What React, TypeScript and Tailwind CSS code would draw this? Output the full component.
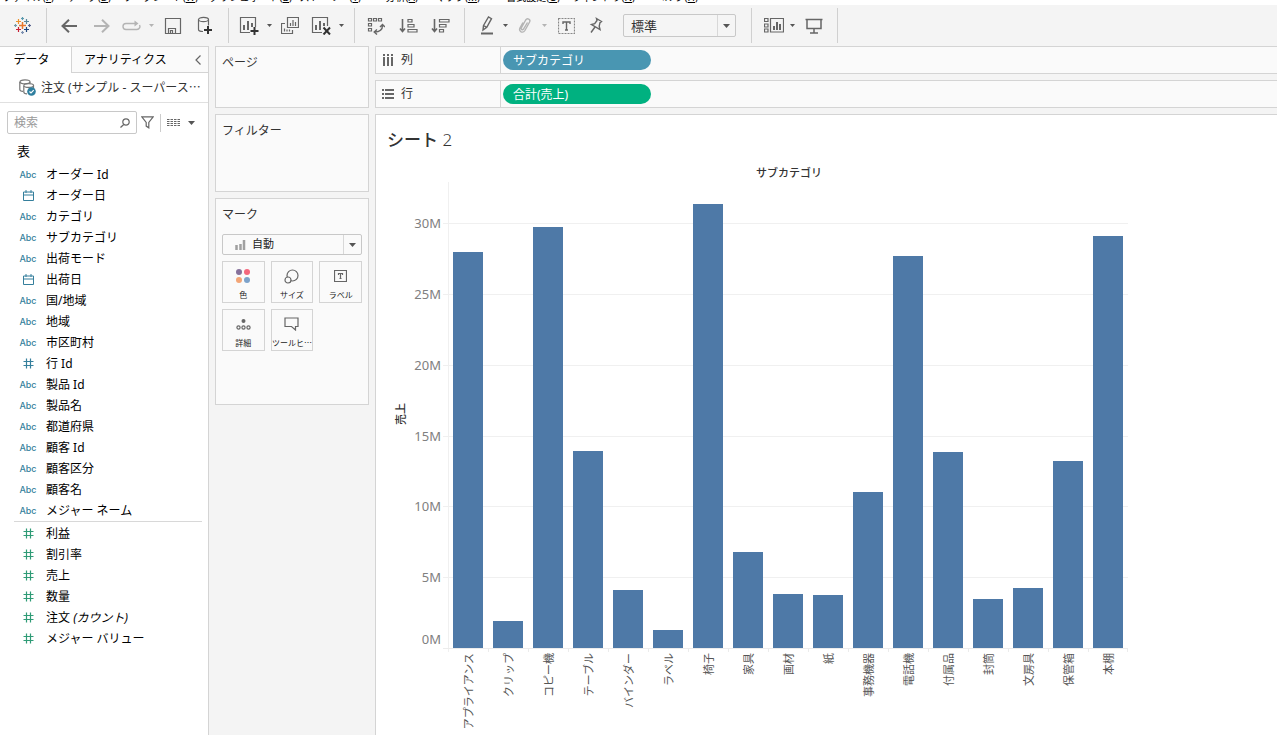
import React from "react";

const menus = [
  { label: "ファイル", key: "F", width: "w-[54px]" },
  { label: "データ", key: "D", width: "w-[57px]" },
  { label: "ワークシート", key: "W", width: "w-[87px]" },
  { label: "ダッシュボード", key: "B", width: "w-[94px]" },
  { label: "ストーリー", key: "T", width: "w-[69px]" },
  { label: "分析", key: "A", width: "w-[57px]" },
  { label: "マップ", key: "M", width: "w-[62px]" },
  { label: "書式設定", key: "O", width: "w-[80px]" },
  { label: "ウィンドウ", key: "N", width: "w-[75px]" },
  { label: "ヘルプ", key: "H", width: "w-[63px]" },
];

type FieldKind = "text" | "date" | "number";

const dimensions: { name: string; kind: FieldKind }[] = [
  { name: "オーダー Id", kind: "text" },
  { name: "オーダー日", kind: "date" },
  { name: "カテゴリ", kind: "text" },
  { name: "サブカテゴリ", kind: "text" },
  { name: "出荷モード", kind: "text" },
  { name: "出荷日", kind: "date" },
  { name: "国/地域", kind: "text" },
  { name: "地域", kind: "text" },
  { name: "市区町村", kind: "text" },
  { name: "行 Id", kind: "number" },
  { name: "製品 Id", kind: "text" },
  { name: "製品名", kind: "text" },
  { name: "都道府県", kind: "text" },
  { name: "顧客 Id", kind: "text" },
  { name: "顧客区分", kind: "text" },
  { name: "顧客名", kind: "text" },
  { name: "メジャー ネーム", kind: "text" },
];

const measures = [
  { name: "利益" },
  { name: "割引率" },
  { name: "売上" },
  { name: "数量" },
  { name: "注文", suffix: "(カウント)" },
  { name: "メジャー バリュー" },
];

/* Bar heights in chart units: 425 units stand for 30M. */
const bars = [
  { name: "アプライアンス", h: 396 },
  { name: "クリップ", h: 27 },
  { name: "コピー機", h: 421 },
  { name: "テーブル", h: 197 },
  { name: "バインダー", h: 58 },
  { name: "ラベル", h: 18 },
  { name: "椅子", h: 444 },
  { name: "家具", h: 96 },
  { name: "画材", h: 54 },
  { name: "紙", h: 53 },
  { name: "事務機器", h: 156 },
  { name: "電話機", h: 392 },
  { name: "付属品", h: 196 },
  { name: "封筒", h: 49 },
  { name: "文房具", h: 60 },
  { name: "保管箱", h: 187 },
  { name: "本棚", h: 412 },
];

const ticks = [
  { label: "30M", y: 58 },
  { label: "25M", y: 129 },
  { label: "20M", y: 200 },
  { label: "15M", y: 271 },
  { label: "10M", y: 341 },
  { label: "5M", y: 412 },
];

function Caret({ className = "fill-[#555]" }: { className?: string }) {
  return (
    <svg width="7" height="4" viewBox="0 0 7 4" className={className} aria-hidden="true">
      <path d="M0 0h7L3.5 4z" />
    </svg>
  );
}

function SmallCaret({ className = "fill-[#555]" }: { className?: string }) {
  return (
    <svg width="5" height="3" viewBox="0 0 5 3" className={className} aria-hidden="true">
      <path d="M0 0h5L2.5 3z" />
    </svg>
  );
}

function Tool({ label, width, children }: { label: string; width: string; children: React.ReactNode }) {
  return (
    <button type="button" aria-label={label} className={`flex h-8 shrink-0 items-center justify-center ${width}`}>
      {children}
    </button>
  );
}

function Separator({ className }: { className: string }) {
  return <div className={`h-[35px] w-px shrink-0 bg-[#d0d0d0] ${className}`} />;
}

function Icon({ w = 18, h = 18, className = "stroke-[#666]", children }: { w?: number; h?: number; className?: string; children: React.ReactNode }) {
  return (
    <svg width={w} height={h} viewBox={`0 0 ${w} ${h}`} fill="none" strokeWidth="1.2" className={`shrink-0 ${className}`} aria-hidden="true">
      {children}
    </svg>
  );
}

function Logo() {
  return (
    <Icon w={17} h={17} className="">
      <path d="M8.5 5v7M5 8.5h7" stroke="#e8762c" strokeWidth="1.5" />
      <path d="M4.5 2v5M2 4.5h5" stroke="#eb912c" />
      <path d="M12.5 2v5M10 4.5h5" stroke="#59879b" />
      <path d="M4.5 10v5M2 12.5h5" stroke="#c72035" />
      <path d="M12.5 10v5M10 12.5h5" stroke="#1f457e" />
      <path d="M8.5 0v3M7 1.5h3" stroke="#5b9aae" />
      <path d="M8.5 14v3M7 15.5h3" stroke="#7b8fb0" />
      <path d="M1.5 7v3M0 8.5h3" stroke="#7199a6" />
      <path d="M15.5 7v3M14 8.5h3" stroke="#5b6591" />
    </Icon>
  );
}

function Toolbar() {
  return (
    <div role="toolbar" aria-label="ツールバー" className="flex h-[41px] items-center bg-[#f4f4f4]">
      <Tool label="スタートページ" width="w-11"><Logo /></Tool>
      <Separator className="mr-1.5 ml-0.5" />
      <Tool label="元に戻す" width="w-8">
        <Icon w={17} h={14}><path d="M1.5 7H16M8 .8L1.5 7L8 13.2" strokeWidth="2" /></Icon>
      </Tool>
      <Tool label="やり直す" width="w-8">
        <Icon w={17} h={14} className="stroke-[#b4b4b4]"><path d="M1 7h14.5M9 .8L15.5 7L9 13.2" strokeWidth="2" /></Icon>
      </Tool>
      <Tool label="繰り返し" width="w-7">
        <Icon w={19} h={12} className="stroke-[#b4b4b4]">
          <path d="M13 3.500H4a3 3 0 0 0 0 6h11a3 3 0 0 0 2.500-4.500" strokeWidth="1.400" />
          <path d="M12.500 .5L16.500 3.500L12.500 6.500z" fill="#b4b4b4" stroke="none" />
        </Icon>
      </Tool>
      <Tool label="繰り返しメニュー" width="w-3"><SmallCaret className="fill-[#b4b4b4]" /></Tool>
      <Tool label="保存" width="w-8">
        <Icon><path d="M1.5 1.5h15v15h-15zM4.500 16.500v-5h7v5M6.500 16.500v-3h2v3" /></Icon>
      </Tool>
      <Tool label="新しいデータソース" width="w-8">
        <Icon w={16} h={19}>
          <path d="M1.500 3.500v10c0 1 2 2 4.500 2M11.500 3.500v6" />
          <ellipse cx="6.500" cy="3.500" rx="5" ry="2.200" />
          <path d="M11 10v8M7 14h8" stroke="#333" strokeWidth="2" />
        </Icon>
      </Tool>
      <Separator className="mr-1 ml-[7px]" />
      <Tool label="新しいワークシート" width="w-8">
        <Icon w={20} h={19}>
          <path d="M11 16.500H1.500v-15h15V11" />
          <path d="M5 14V9M9 14V5M13 11V7" strokeWidth="2" />
          <path d="M15.500 11v8M11.500 15h8" stroke="#333" strokeWidth="2" />
        </Icon>
      </Tool>
      <Tool label="新規メニュー" width="w-2"><SmallCaret /></Tool>
      <Tool label="複製" width="w-[34px]">
        <Icon>
          <path d="M6.500 .5h11v10h-11zM4 6.500H.5v10h11V13" />
          <path d="M9.500 9V6M12 9V3M14.500 9V5M3.500 14.500v-3M6 14.500v-2M8.500 14.500v-2" />
        </Icon>
      </Tool>
      <Tool label="クリア" width="w-7">
        <Icon w={20} h={19}>
          <path d="M11 16.500H1.500v-15h15V10" />
          <path d="M5 14V9M9 14V5M13 10V7" strokeWidth="2" />
          <path d="M12.500 11.500l6.500 7M19 11.500l-6.500 7" stroke="#333" strokeWidth="2" />
        </Icon>
      </Tool>
      <Tool label="クリアメニュー" width="w-3"><SmallCaret /></Tool>
      <Separator className="mr-[5px] ml-[7px]" />
      <Tool label="行と列の交換" width="w-8">
        <Icon>
          <path d="M1.500 1.500h3v2.500h-3zM6.500 1.500h3v2.500h-3zM11.500 1.500h3v2.500h-3zM1.500 6.500h3V9h-3zM1.500 11.500h3V14h-3z" />
          <path d="M15.500 8.500c0 4-2.500 6.500-8 6.500M13 10l2.500-2.500L18 10M10 12.500L7.200 15l2.800 2.500" strokeWidth="1.400" />
        </Icon>
      </Tool>
      <Tool label="昇順で並べ替え" width="w-8">
        <Icon w={19} h={16}>
          <path d="M3.500 1v12M1 10.500l2.500 3L6 10.500" strokeWidth="1.600" />
          <path d="M9 1.500h4V4H9zM9 6.500h6V9H9zM9 11.500h9V14H9z" />
        </Icon>
      </Tool>
      <Tool label="降順で並べ替え" width="w-8">
        <Icon w={19} h={16}>
          <path d="M3.500 1v12M1 10.500l2.500 3L6 10.500" strokeWidth="1.600" />
          <path d="M8.500 1.500h9.500V4H8.500zM8.500 6.500h6.500V9H8.500zM8.500 11.500h4V14h-4z" />
        </Icon>
      </Tool>
      <Separator className="mr-2 ml-2" />
      <Tool label="ハイライト" width="w-7">
        <Icon w={14} h={19}>
          <path d="M3.500 9.500L8.500 1l3 1.700L6.800 11.300L3 14zM3.500 9.500l3.300 1.800" strokeWidth="1.400" />
          <path d="M1 17.500h12" strokeWidth="2" />
        </Icon>
      </Tool>
      <Tool label="ハイライトメニュー" width="w-2"><SmallCaret /></Tool>
      <Tool label="グループ" width="w-[31px]">
        <Icon w={15} h={17} className="stroke-[#b4b4b4]">
          <path d="M10.500 5.500L6.500 12c-1 1.500-3 .5-2.200-1.200L8.700 3c1.600-2.400 5.200-.6 3.900 2L7.900 13.500c-2 3.200-6.700 1-5-2.400L6 5.500" strokeWidth="1.400" />
        </Icon>
      </Tool>
      <Tool label="グループメニュー" width="w-2"><SmallCaret className="fill-[#b4b4b4]" /></Tool>
      <Tool label="マークラベルの表示" width="w-9">
        <Icon w={17} h={16}>
          <path d="M.5 .5h16v15H.5z" strokeDasharray="2 1" stroke="#888" />
          <path d="M5 6V4h7v2M8.500 4v8M7 12h3" strokeWidth="1.400" />
        </Icon>
      </Tool>
      <Tool label="軸の固定" width="w-6">
        <Icon w={14} h={17}>
          <path d="M7.500 1.500l5 3-1.500 1.200-.8 3.500L11 12.500 2.500 7.500l3.200-.8L8 3.500zM6 10L2 15.500" strokeWidth="1.400" />
        </Icon>
      </Tool>
      <div className="relative ml-[15px] flex h-[23px] w-[113px] shrink-0 items-center rounded-xs border border-[#c8c8c8] bg-[#f5f5f5]">
        <select aria-label="表示サイズ" defaultValue="標準" className="h-full w-full appearance-none bg-transparent pl-[7px] text-[13px] leading-5 text-[#333] outline-none">
          <option>標準</option>
        </select>
        <div className="pointer-events-none absolute inset-y-0 right-0 flex w-[18px] items-center justify-center border-l border-[#d8d8d8]"><Caret /></div>
      </div>
      <Separator className="mr-2 ml-[15px]" />
      <Tool label="カードの表示" width="w-7">
        <Icon w={20} h={15}>
          <path d="M.5 .5h3.500v3H.5zM.5 6h3.500v3H.5zM.5 11h3.500v3H.5zM6.500 .5h13v13.500h-13z" />
          <path d="M10 12V8M13 12V4M16 12V6" strokeWidth="2" />
        </Icon>
      </Tool>
      <Tool label="カードメニュー" width="w-2"><SmallCaret /></Tool>
      <Tool label="プレゼンテーションモード" width="w-9">
        <Icon w={18} h={16}>
          <path d="M.5 1.500h17M2 2v8.500h14V2M9 10.500v4M5 15h8" strokeWidth="1.500" />
        </Icon>
      </Tool>
      <Separator className="ml-[5px]" />
    </div>
  );
}

function FieldIcon({ kind, color }: { kind: FieldKind; color: string }) {
  if (kind === "text") {
    return <span className="font-[Inter] text-[9px] font-medium text-[#357f9c]">Abc</span>;
  }
  if (kind === "date") {
    return (
      <Icon w={11} h={11} className={color}>
        <path d="M.5 2h10v8.500H.5zM.5 5h10M3 0v3M8 0v3" strokeWidth="1" />
      </Icon>
    );
  }
  return (
    <Icon w={11} h={11} className={color}>
      <path d="M3.500 .5v10M7.500 .5v10M.5 3.500h10M.5 7.500h10" />
    </Icon>
  );
}

function Field({ name, kind, color, suffix }: { name: string; kind: FieldKind; color: string; suffix?: string }) {
  return (
    <li className="flex h-[21px] items-center">
      <span className="flex w-[18px] shrink-0 justify-center"><FieldIcon kind={kind} color={color} /></span>
      <span className="ml-[9px] whitespace-nowrap text-xs text-black">
        {name}
        {suffix && <span className="italic"> {suffix}</span>}
      </span>
    </li>
  );
}

function DataPane() {
  return (
    <aside className="flex w-[209px] shrink-0 flex-col border-t border-r border-[#d4d4d4] bg-white">
      <div className="flex h-[26px]">
        <button type="button" className="w-[71px] pr-2 text-xs text-black">データ</button>
        <div className="flex flex-1 items-center justify-between border-b border-l border-[#d4d4d4] bg-[#fafafa] pr-[7px] pl-3">
          <button type="button" className="text-xs text-black">アナリティクス</button>
          <button type="button" aria-label="ペインを閉じる">
            <Icon w={6} h={10}><path d="M5.500 .5L1 5l4.500 4.500" /></Icon>
          </button>
        </div>
      </div>
      <div className="flex h-[30px] items-center border-b border-[#e0e0e0] pl-[19px]">
        <Icon w={17} h={17} className="stroke-[#777]">
          <path d="M.8 3v7.500c0 1 1.500 1.800 3.200 1.800M11 3v1" />
          <ellipse cx="6" cy="2.800" rx="5" ry="2" />
          <path d="M4.800 7v6c0 1 1.500 1.800 3.200 1.800M14.500 7v2" />
          <ellipse cx="9.700" cy="6.500" rx="4.900" ry="1.900" />
          <circle cx="12.500" cy="12.500" r="4.300" fill="#2f7f9f" stroke="none" />
          <path d="M10.500 12.500l1.500 1.500 2.700-2.800" stroke="#fff" />
        </Icon>
        <span className="ml-[5px] whitespace-nowrap text-xs text-[#333]">
          注文 (サンプル - スーパース<span className="font-['Noto_Sans_CJK_JP']">…</span>
        </span>
      </div>
      <div className="flex items-center pt-2 pl-[7px]">
        <label className="flex h-[23px] w-[130px] items-center rounded-xs border border-[#c8c8c8] pr-1.5 pl-1.5">
          <input type="text" aria-label="検索" placeholder="検索" className="w-0 flex-1 bg-transparent text-xs text-[#333] outline-none placeholder:text-[#999]" />
          <Icon w={10} h={10}><circle cx="6" cy="4" r="3.200" /><path d="M3.700 6.500L.5 9.500" /></Icon>
        </label>
        <button type="button" aria-label="フィルター" className="ml-1">
          <Icon w={13} h={13}><path d="M.8 .8h11.400L7.800 6.500v5.300l-2.600-1.700V6.500z" /></Icon>
        </button>
        <div className="ml-1.5 h-[18px] w-px bg-[#ccc]" />
        <button type="button" aria-label="表示方法" className="ml-1.5 flex items-center gap-2">
          <Icon w={13} h={9}><path d="M0 1.500h13M0 3.500h13M0 5.500h13M0 7.500h13" strokeDasharray="2.500 1" strokeWidth="1" /></Icon>
          <Caret />
        </button>
      </div>
      <h2 className="mt-[7px] h-5 pl-[17px] text-[13px] leading-5 text-black">表</h2>
      <ul className="mx-1.5 mt-[3px] ml-3.5 border-b border-[#d8d8d8] pl-[5px]">
        {dimensions.map((d) => (
          <Field key={d.name} name={d.name} kind={d.kind} color="stroke-[#357f9c]" />
        ))}
      </ul>
      <ul className="mt-px ml-3.5 pl-[5px]">
        {measures.map((m) => (
          <Field key={m.name} name={m.name} kind="number" color="stroke-[#2f9b76]" suffix={m.suffix} />
        ))}
      </ul>
    </aside>
  );
}

function Card({ title, height, children }: { title: string; height: string; children?: React.ReactNode }) {
  return (
    <section className={`border border-[#d4d4d4] bg-[#fafafa] px-1.5 pt-1.5 ${height}`}>
      <h2 className="text-xs leading-5 text-[#333]">{title}</h2>
      {children}
    </section>
  );
}

function MarkButton({ label, clipped = false, children }: { label: string; clipped?: boolean; children: React.ReactNode }) {
  return (
    <button type="button" className="flex h-[42px] flex-col items-center justify-between border border-[#d4d4d4] pt-1.5 pb-px">
      <span className="flex h-4 items-center">{children}</span>
      <span className="text-[8px] leading-3 whitespace-nowrap text-[#222]">
        {label}
        {clipped && <span className="font-['Noto_Sans_CJK_JP']">…</span>}
      </span>
    </button>
  );
}

function Cards() {
  return (
    <div className="flex w-[154px] shrink-0 flex-col gap-1.5">
      <Card title="ページ" height="h-[62px]" />
      <Card title="フィルター" height="h-[78px]" />
      <Card title="マーク" height="h-[207px]">
        <div className="relative mt-[9px] flex h-[21px] items-center rounded-xs border border-[#c8c8c8]">
          <select aria-label="マークの種類" defaultValue="自動" className="h-full w-full appearance-none bg-transparent pl-[29px] text-[11px] text-[#222] outline-none">
            <option>自動</option>
          </select>
          <div className="pointer-events-none absolute inset-y-0 left-3 flex items-center">
            <Icon w={11} h={10} className="stroke-[#a0a0a0]"><path d="M1.500 10V5M5.500 10V4M9 10V0" strokeWidth="2.500" /></Icon>
          </div>
          <div className="pointer-events-none absolute inset-y-0 right-0 flex w-[18px] items-center justify-center border-l border-[#d8d8d8]"><Caret /></div>
        </div>
        <div className="mt-1.5 grid grid-cols-3 gap-1.5">
          <MarkButton label="色">
            <Icon w={14} h={14} className="">
              <circle cx="3" cy="3" r="3" fill="#86719b" /><circle cx="11" cy="3" r="3" fill="#f4677d" />
              <circle cx="3" cy="11" r="3" fill="#f3a576" /><circle cx="11" cy="11" r="3" fill="#7da2ca" />
            </Icon>
          </MarkButton>
          <MarkButton label="サイズ">
            <Icon w={15} h={15}><circle cx="8.500" cy="6.500" r="5.500" /><circle cx="4" cy="11" r="3" fill="#fafafa" /></Icon>
          </MarkButton>
          <MarkButton label="ラベル">
            <Icon w={13} h={12}><path d="M.5 .5h12v11H.5zM4.500 5V3.500h4V5M6.500 3.500v5M5.500 8.500h2" /></Icon>
          </MarkButton>
          <MarkButton label="詳細">
            <Icon w={15} h={11}>
              <circle cx="7.500" cy="2" r="2" fill="#666" stroke="none" />
              <circle cx="2.500" cy="8.500" r="1.600" /><circle cx="7.500" cy="8.500" r="1.600" /><circle cx="12.500" cy="8.500" r="1.600" />
            </Icon>
          </MarkButton>
          <MarkButton label="ツールヒ" clipped>
            <Icon w={15} h={14}><path d="M1 1h13v8.500h-2.500V13L7.500 9.500H1z" /></Icon>
          </MarkButton>
        </div>
      </Card>
    </div>
  );
}

function Shelf({ label, icon, pill, color }: { label: string; icon: React.ReactNode; pill: string; color: string }) {
  return (
    <div className="flex h-7 items-center border border-r-0 border-[#d4d4d4] bg-[#fafafa]">
      <div className="flex h-full w-[125px] shrink-0 items-center gap-[7px] border-r border-[#d4d4d4] pl-1.5 text-xs text-[#333]">
        {icon}
        {label}
      </div>
      <button type="button" className={`ml-0.5 h-5 w-[148px] rounded-full pt-0.5 pl-2.5 text-left text-xs leading-4 text-white ${color}`}>{pill}</button>
    </div>
  );
}

function Chart() {
  return (
    <svg width="744" height="570" viewBox="384 165 744 570" role="img" aria-label="サブカテゴリ別の売上" className="ml-2 block">
      <text x="789" y="177" textAnchor="middle" className="fill-[#333] text-[11px] font-medium">サブカテゴリ</text>
      <text transform="translate(405 414) rotate(-90)" textAnchor="middle" className="fill-[#333] text-[11px] font-medium">売上</text>
      <g shapeRendering="crispEdges">
        {ticks.map((t) => (
          <rect key={t.label} x="443" y={165 + t.y} width="685" height="1" fill="#f0f0f0" />
        ))}
        <rect x="448" y="182" width="1" height="470" fill="#f0f0f0" />
        <rect x="443" y="648" width="685" height="1" fill="#ececec" />
        {bars.map((b, i) => (
          <g key={b.name}>
            <rect x={453 + i * 40} y={648 - b.h} width="30" height={b.h} fill="#4e79a7" />
            <rect x={488 + i * 40 - (i === 16 ? 1 : 0)} y="648" width="1" height="4" fill="#ececec" />
          </g>
        ))}
      </g>
      <g textAnchor="end" className="fill-[#808080] text-[13px]">
        {ticks.map((t) => (
          <text key={t.label} x="441" y={170 + t.y}>{t.label}</text>
        ))}
        <text x="441" y="644">0M</text>
      </g>
      <g textAnchor="end" className="fill-[#555] text-[11px]">
        {bars.map((b, i) => (
          <text key={b.name} transform={`translate(${473 + i * 40} 653) rotate(-90)`}>{b.name}</text>
        ))}
      </g>
    </svg>
  );
}

export default function App() {
  return (
    <div lang="ja" className="flex min-h-screen flex-col overflow-hidden bg-[#f4f4f4] font-['Noto_Sans','Noto_Sans_CJK_JP',sans-serif]">
      <nav aria-label="メニュー" className="flex h-[5px] items-end overflow-hidden bg-white pb-[3px]">
        {menus.map((m) => (
          <a key={m.key} href="#" className={`flex shrink-0 justify-end text-[10px] leading-[10px] whitespace-nowrap text-black ${m.width}`}>
            <span>{m.label}(<u>{m.key}</u>)</span>
          </a>
        ))}
      </nav>
      <Toolbar />
      <div className="flex flex-1">
        <DataPane />
        <div className="flex flex-1 gap-1.5 pl-1.5">
          <Cards />
          <main className="flex min-w-0 flex-1 flex-col gap-1.5">
            <Shelf
              label="列"
              pill="サブカテゴリ"
              color="bg-[#4996b2]"
              icon={<Icon w={12} h={12}><path d="M2 0v2M6 0v2M10 0v2M2 3v9M6 3v9M10 3v9" strokeWidth="2" /></Icon>}
            />
            <Shelf
              label="行"
              pill="合計(売上)"
              color="bg-[#00b180]"
              icon={<Icon w={12} h={12}><path d="M0 2h2M0 6h2M0 10h2M3 2h9M3 6h9M3 10h9" strokeWidth="2" /></Icon>}
            />
            <div className="flex-1 border-t border-l border-[#d4d4d4] bg-white">
              <h1 className="h-[50px] pt-3 pl-[11px] text-[17px] leading-[26px] text-[#333]">
                <span className="font-medium">シート</span> <span className="font-light">2</span>
              </h1>
              <Chart />
            </div>
          </main>
        </div>
      </div>
    </div>
  );
}
